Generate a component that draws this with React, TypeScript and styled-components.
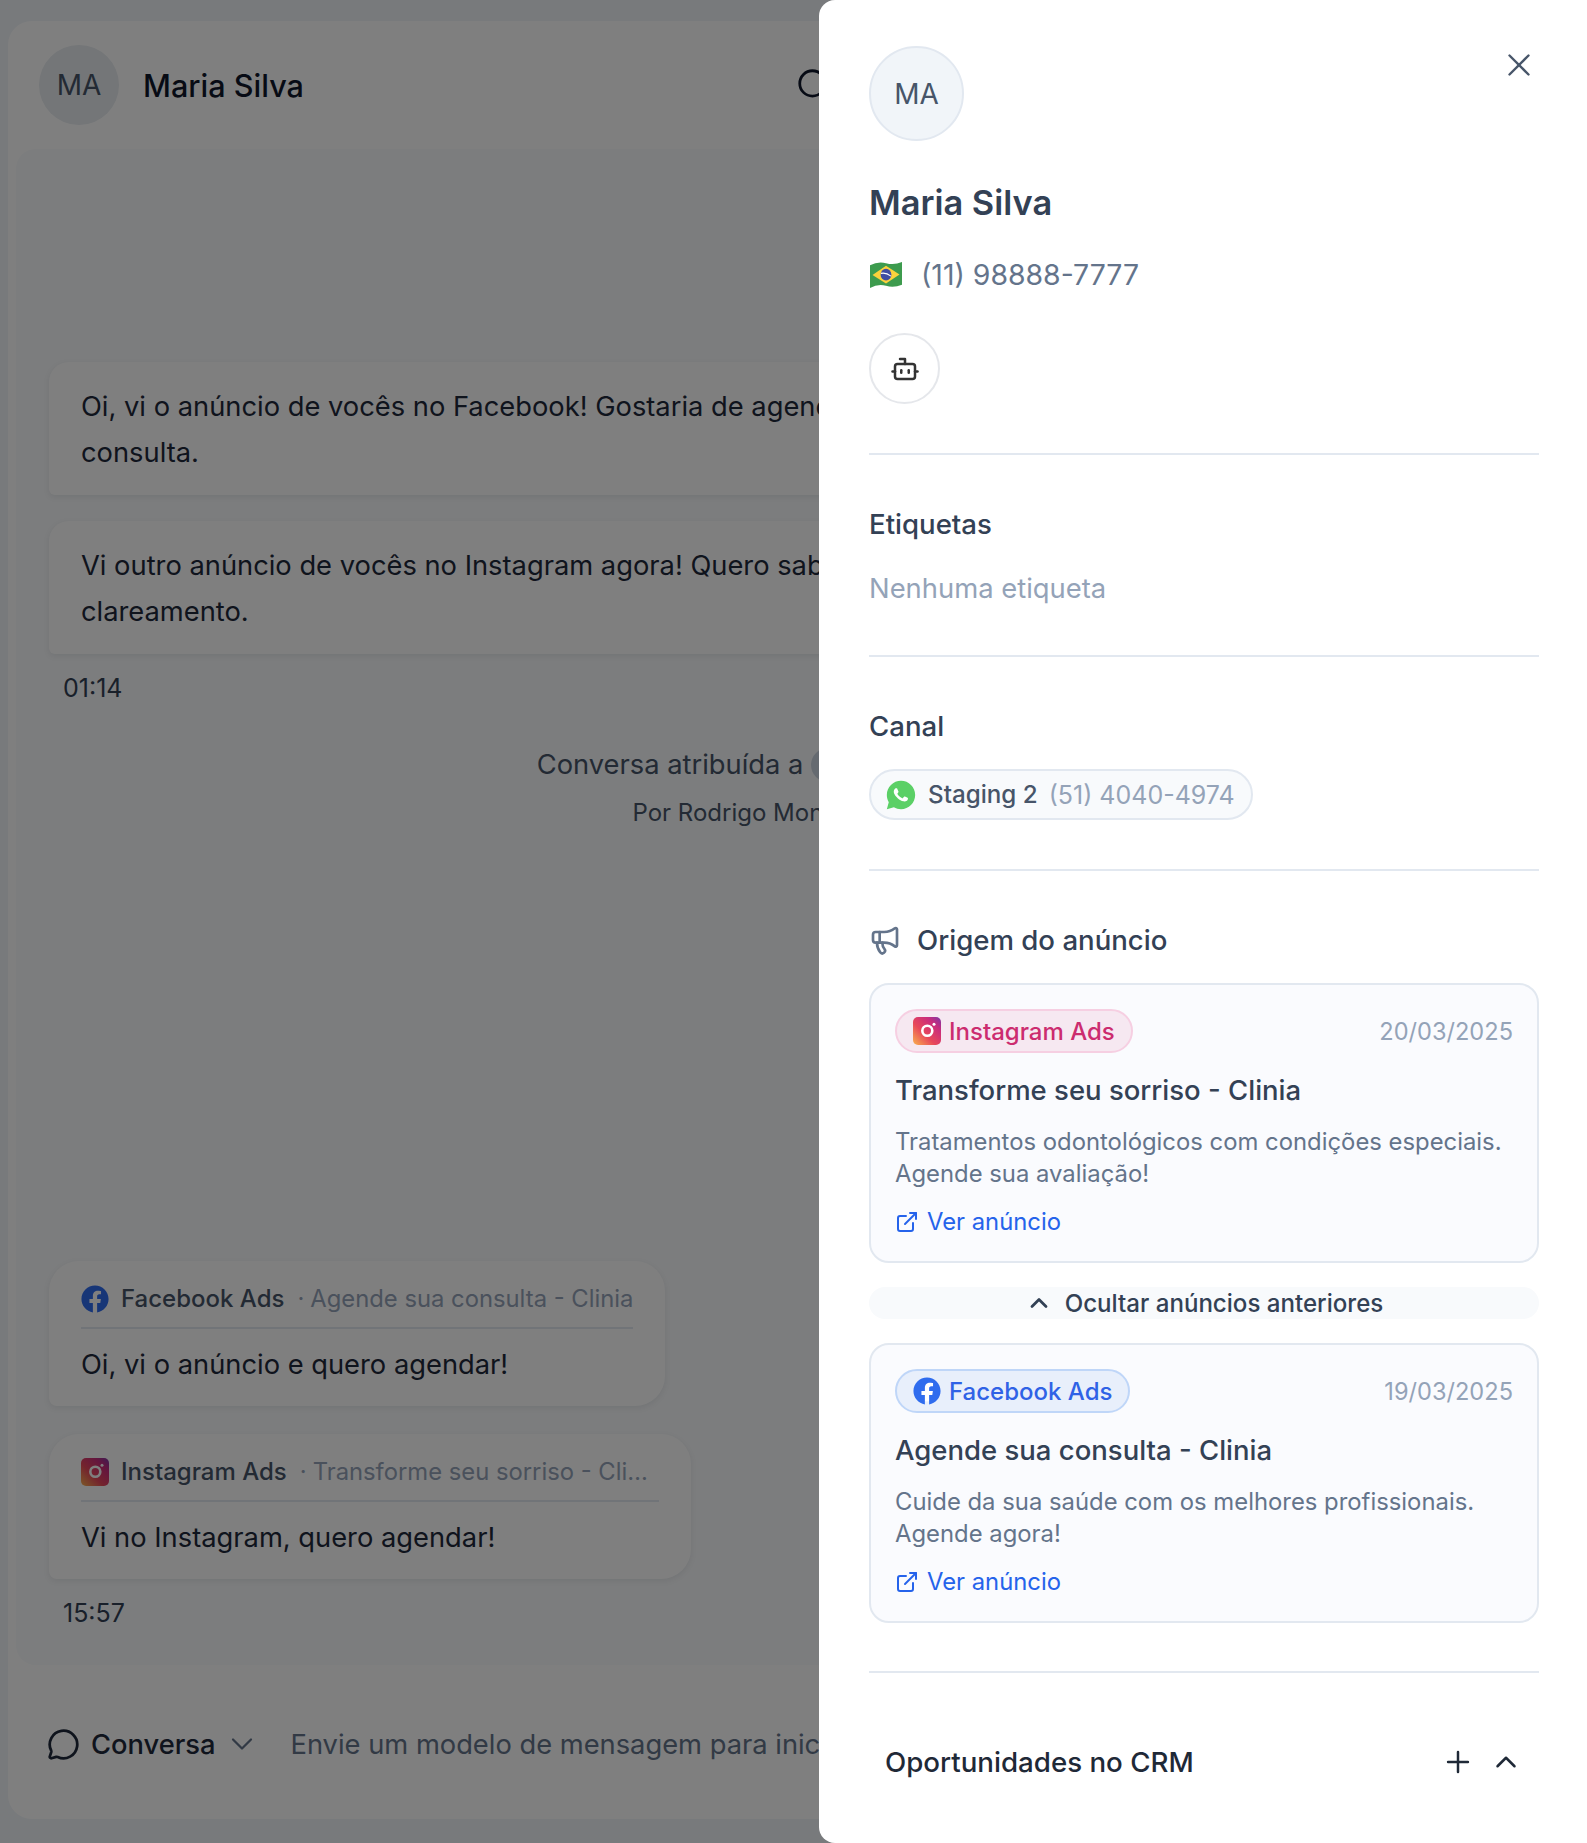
import styled, { createGlobalStyle } from "styled-components"
import {
   Bot,
   ChevronDown,
   ChevronUp,
   ExternalLink,
   Megaphone,
   MessageCircle,
   Plus,
   Search,
   X,
} from "lucide-react"
import { FaFacebook } from "react-icons/fa"
import { RiWhatsappFill } from "react-icons/ri"

const GlobalStyle = createGlobalStyle`
   html, body {
      margin: 0;
      padding: 0;
      height: 1843px;
      overflow: hidden;
      background: #f1f5f9;
      font-family: Inter, "Noto Sans", sans-serif;
   }
   * {
      box-sizing: border-box;
   }
`

const InstagramIcon = ({ size }: { size: number }) => (
   <svg width={size} height={size} viewBox="0 0 28 28" style={{ flexShrink: 0 }}>
      <defs>
         <linearGradient id="ig-gradient" x1="0" y1="1" x2="1" y2="0">
            <stop offset="0" stopColor="#f9b24e" />
            <stop offset="0.4" stopColor="#e8485a" />
            <stop offset="0.75" stopColor="#c92c7c" />
            <stop offset="1" stopColor="#7a38a8" />
         </linearGradient>
      </defs>
      <rect width="28" height="28" rx="5" fill="url(#ig-gradient)" />
      <circle cx="14.3" cy="13.8" r="5" fill="none" stroke="#fff" strokeWidth="2.6" />
      <circle cx="21" cy="7.2" r="1.5" fill="#fff" />
   </svg>
)

const BrazilFlag = () => (
   <svg width="34" height="28" viewBox="0 0 34 26" preserveAspectRatio="none">
      <path d="M1 4 Q9 0 17 2 T33 1 V22 Q25 25 17 23 T1 25 Z" fill="#3d9b4e" />
      <path d="M3.5 13 L17 4.5 L30.5 12.5 L17 21 Z" fill="#fbd23c" />
      <circle cx="17" cy="12.7" r="5.4" fill="#3f4da3" />
      <path d="M12 11.5 Q17 10.5 22 14" fill="none" stroke="#fff" strokeWidth="1" />
   </svg>
)

export default function App() {
   return (
      <>
         <GlobalStyle />
         <Page>
            <ChatCard>
               <ChatHeader>
                  <ChatAvatar>MA</ChatAvatar>
                  <ChatName>Maria Silva</ChatName>
                  <HeaderActions>
                     <Search size={38} strokeWidth={1.75} />
                  </HeaderActions>
               </ChatHeader>
               <Messages>
                  <Bubble>Oi, vi o anúncio de vocês no Facebook! Gostaria de agendar uma consulta.</Bubble>
                  <Bubble>Vi outro anúncio de vocês no Instagram agora! Quero saber sobre clareamento.</Bubble>
                  <Time>01:14</Time>
                  <SystemNote>
                     <SystemLine>
                        Conversa atribuída a <SystemAvatar /> Rodrigo Monteiro
                     </SystemLine>
                     <SystemBy>Por Rodrigo Monteiro às 01:14</SystemBy>
                  </SystemNote>
                  <AdBubble>
                     <AdBubbleHeader>
                        <FacebookGlyph $size={28}><FaFacebook size={28} /></FacebookGlyph>
                        <AdSource>Facebook Ads</AdSource>
                        <AdDot>·</AdDot>
                        <AdTitle>Agende sua consulta - Clinia</AdTitle>
                     </AdBubbleHeader>
                     <AdBubbleText>Oi, vi o anúncio e quero agendar!</AdBubbleText>
                  </AdBubble>
                  <AdBubble $wide>
                     <AdBubbleHeader>
                        <InstagramIcon size={28} />
                        <AdSource>Instagram Ads</AdSource>
                        <AdDot>·</AdDot>
                        <AdTitle>Transforme seu sorriso - Clinia</AdTitle>
                     </AdBubbleHeader>
                     <AdBubbleText>Vi no Instagram, quero agendar!</AdBubbleText>
                  </AdBubble>
                  <Time>15:57</Time>
               </Messages>
               <Composer>
                  <MessageCircle size={33} strokeWidth={2} color="#1e293b" />
                  <ComposerMode>Conversa</ComposerMode>
                  <ChevronDown size={36} strokeWidth={1.5} color="#64748b" />
                  <ComposerHint>Envie um modelo de mensagem para iniciar a conversa</ComposerHint>
               </Composer>
            </ChatCard>
         </Page>

         <Backdrop />

         <Drawer>
            <CloseButton>
               <X size={38} strokeWidth={1.5} />
            </CloseButton>

            <ProfileSection>
               <ProfileAvatar>MA</ProfileAvatar>
               <ProfileName>Maria Silva</ProfileName>
               <PhoneRow>
                  <BrazilFlag />
                  <span>(11) 98888-7777</span>
               </PhoneRow>
               <BotButton>
                  <Bot size={30} strokeWidth={2} />
               </BotButton>
            </ProfileSection>

            <Section>
               <SectionTitle>Etiquetas</SectionTitle>
               <EmptyText>Nenhuma etiqueta</EmptyText>
            </Section>

            <Section>
               <SectionTitle>Canal</SectionTitle>
               <ChannelPill>
                  <WhatsappGlyph><RiWhatsappFill size={34} /></WhatsappGlyph>
                  <ChannelName>Staging 2</ChannelName>
                  <ChannelPhone>(51) 4040-4974</ChannelPhone>
               </ChannelPill>
            </Section>

            <Section>
               <OriginTitle>
                  <Megaphone size={32} strokeWidth={2} color="#64748b" />
                  <SectionTitle>Origem do anúncio</SectionTitle>
               </OriginTitle>

               <AdCard>
                  <AdCardTop>
                     <SourceBadge $variant="instagram">
                        <InstagramIcon size={28} />
                        Instagram Ads
                     </SourceBadge>
                     <AdDate>20/03/2025</AdDate>
                  </AdCardTop>
                  <AdCardTitle>Transforme seu sorriso - Clinia</AdCardTitle>
                  <AdCardText>Tratamentos odontológicos com condições especiais. Agende sua avaliação!</AdCardText>
                  <AdLink>
                     <ExternalLink size={24} strokeWidth={2} />
                     Ver anúncio
                  </AdLink>
               </AdCard>

               <ToggleOlder>
                  <ChevronUp size={28} strokeWidth={2.4} />
                  Ocultar anúncios anteriores
               </ToggleOlder>

               <AdCard>
                  <AdCardTop>
                     <SourceBadge $variant="facebook">
                        <FacebookGlyph $size={28}><FaFacebook size={28} /></FacebookGlyph>
                        Facebook Ads
                     </SourceBadge>
                     <AdDate>19/03/2025</AdDate>
                  </AdCardTop>
                  <AdCardTitle>Agende sua consulta - Clinia</AdCardTitle>
                  <AdCardText>Cuide da sua saúde com os melhores profissionais. Agende agora!</AdCardText>
                  <AdLink>
                     <ExternalLink size={24} strokeWidth={2} />
                     Ver anúncio
                  </AdLink>
               </AdCard>
            </Section>

            <CrmRow>
               <CrmTitle>Oportunidades no CRM</CrmTitle>
               <CrmActions>
                  <Plus size={34} strokeWidth={1.75} />
                  <ChevronUp size={34} strokeWidth={1.75} />
               </CrmActions>
            </CrmRow>
         </Drawer>
      </>
   )
}


const Page = styled.div`
   display: flex;
   height: 1843px;
   padding: 21px 8px 24px;
`

const ChatCard = styled.div`
   display: flex;
   flex-direction: column;
   flex: 1;
   background: #ffffff;
   border-radius: 24px;
   overflow: hidden;
`

const ChatHeader = styled.div`
   display: flex;
   flex-direction: row;
   align-items: center;
   flex-shrink: 0;
   height: 128px;
   padding: 0 31px;
   gap: 24px;
`

const ChatAvatar = styled.div`
   display: flex;
   align-items: center;
   justify-content: center;
   width: 80px;
   height: 80px;
   border-radius: 50%;
   background: #e8ecf0;
   color: #475569;
   font-size: 28px;
`

const ChatName = styled.div`
   color: #0f172a;
   font-size: 30.6px;
   font-weight: 500;
`

const HeaderActions = styled.div`
   display: flex;
   margin-left: 467px;
   color: #0f172a;
`

const Messages = styled.div`
   display: flex;
   flex-direction: column;
   align-items: flex-start;
   flex: 1;
   margin: 0 8px;
   padding: 187px 33px 0;
   background: #f8fafc;
   border-radius: 20px;
`

const Bubble = styled.div`
   width: 1000px;
   padding: 22px 32px 19px;
   margin-top: 26px;
   background: #ffffff;
   border-radius: 20px 20px 20px 6px;
   box-shadow: 0 2px 6px rgba(15, 23, 42, 0.08);
   color: #1e293b;
   font-size: 27.3px;
   line-height: 46px;
`

const Time = styled.div`
   margin: 18px 0 0 14px;
   color: #334155;
   font-size: 25px;
   line-height: 32px;
`

const SystemNote = styled.div`
   display: flex;
   flex-direction: column;
   align-items: center;
   align-self: stretch;
   gap: 12px;
   margin-top: 41px;
   margin-bottom: 404px;
`

const SystemLine = styled.div`
   display: flex;
   align-items: center;
   gap: 8px;
   margin-left: 26px;
   color: #475569;
   font-size: 27.3px;
   line-height: 40px;
`

const SystemAvatar = styled.span`
   width: 34px;
   height: 34px;
   border-radius: 50%;
   background: #cbd5e1;
`

const SystemBy = styled.div`
   margin-left: 16px;
   color: #475569;
   font-size: 24px;
   line-height: 32px;
`

const AdBubble = styled.div<{ $wide?: boolean }>`
   display: flex;
   flex-direction: column;
   width: ${({ $wide }) => $wide ? "642px" : "auto"};
   padding: 22px 32px 21px;
   margin-top: 28px;
   background: #ffffff;
   border-radius: 30px 30px 30px 8px;
   box-shadow: 0 2px 6px rgba(15, 23, 42, 0.08);
`

const AdBubbleHeader = styled.div`
   display: flex;
   align-items: center;
   padding-bottom: 12px;
   border-bottom: 2px solid #e2e8f0;
   font-size: 23.8px;
   line-height: 32px;
`

const AdSource = styled.span`
   margin-left: 12px;
   color: #475569;
   font-size: 24px;
   font-weight: 500;
   white-space: nowrap;
`

const AdDot = styled.span`
   margin: 0 6px 0 13px;
   color: #94a3b8;
`

const AdTitle = styled.span`
   min-width: 0;
   max-width: 337px;
   color: #94a3b8;
   white-space: nowrap;
   overflow: hidden;
   text-overflow: ellipsis;
`

const AdBubbleText = styled.div`
   margin-top: 16px;
   color: #1e293b;
   font-size: 27.3px;
   line-height: 40px;
`

const Composer = styled.div`
   display: flex;
   align-items: center;
   flex-shrink: 0;
   height: 154px;
   padding: 4px 39px 0;
`

const ComposerMode = styled.span`
   margin-left: 11px;
   margin-right: 9px;
   color: #1e293b;
   font-size: 27.3px;
   font-weight: 500;
`

const ComposerHint = styled.span`
   margin-left: 30px;
   color: #64748b;
   font-size: 27.3px;
   white-space: nowrap;
`

const Backdrop = styled.div`
   position: fixed;
   inset: 0;
   background: rgba(0, 0, 0, 0.5);
`

const Drawer = styled.aside`
   position: fixed;
   top: 0;
   right: 0;
   bottom: 0;
   width: 768px;
   padding: 46px 48px 0 50px;
   background: #ffffff;
   border-radius: 16px 0 0 16px;
   overflow: hidden;
`

const CloseButton = styled.button`
   position: absolute;
   top: 46px;
   right: 49px;
   display: flex;
   padding: 0;
   background: none;
   border: none;
   color: #475569;
`

const ProfileSection = styled.div`
   display: flex;
   flex-direction: column;
   align-items: flex-start;
   padding-bottom: 49px;
   border-bottom: 2px solid #e2e8f0;
`

const ProfileAvatar = styled.div`
   display: flex;
   align-items: center;
   justify-content: center;
   width: 95px;
   height: 95px;
   border-radius: 50%;
   background: #f1f5f9;
   border: 2px solid #e2e8f0;
   color: #475569;
   font-size: 28px;
`

const ProfileName = styled.h2`
   margin: 42px 0 0;
   color: #334155;
   font-size: 34.4px;
   font-weight: 600;
   line-height: 40px;
`

const PhoneRow = styled.div`
   display: flex;
   align-items: center;
   gap: 18px;
   margin-top: 34px;
   color: #64748b;
   font-size: 28.4px;
   line-height: 36px;
`

const BotButton = styled.div`
   display: flex;
   align-items: center;
   justify-content: center;
   width: 71px;
   height: 71px;
   margin-top: 40px;
   border: 2px solid #e5e7eb;
   border-radius: 50%;
   color: #333333;
`

const Section = styled.section`
   padding: 51px 0 49px;
   border-bottom: 2px solid #e2e8f0;

   &:last-of-type {
      padding-bottom: 48px;
   }
`

const SectionTitle = styled.div`
   color: #334155;
   font-size: 27.6px;
   font-weight: 500;
   line-height: 36px;
`

const EmptyText = styled.div`
   margin-top: 28px;
   color: #94a3b8;
   font-size: 27.4px;
   line-height: 36px;
`

const ChannelPill = styled.div`
   display: inline-flex;
   align-items: center;
   height: 51px;
   margin-top: 25px;
   padding: 0 16px 0 13px;
   background: #f8fafc;
   border: 2px solid #e2e8f0;
   border-radius: 26px;
   font-size: 25px;
   white-space: nowrap;
`

const WhatsappGlyph = styled.span`
   display: flex;
   color: #5bd066;
   background: radial-gradient(circle, #ffffff 55%, transparent 60%);
   margin-right: 10px;
`

const ChannelName = styled.span`
   margin-right: 11px;
   color: #475569;
   font-size: 24.2px;
   font-weight: 500;
`

const ChannelPhone = styled.span`
   color: #94a3b8;
`

const OriginTitle = styled.div`
   display: flex;
   align-items: center;
   gap: 16px;
`

const AdCard = styled.div`
   display: flex;
   flex-direction: column;
   align-items: flex-start;
   height: 280px;
   margin-top: 25px;
   padding: 24px 24px 0;
   background: #fafbfe;
   border: 2px solid #e2e8f0;
   border-radius: 20px;
`

const AdCardTop = styled.div`
   display: flex;
   align-items: center;
   justify-content: space-between;
   align-self: stretch;
`

const SourceBadge = styled.div<{ $variant: "instagram" | "facebook" }>`
   display: inline-flex;
   align-items: center;
   gap: 8px;
   height: 44px;
   padding: 0 16px;
   border-radius: 22px;
   border: 2px solid ${({ $variant }) => $variant === "instagram" ? "#f6cfe2" : "#bfd6f8"};
   background: ${({ $variant }) => $variant === "instagram" ? "#f6e8f1" : "#e8effb"};
   color: ${({ $variant }) => $variant === "instagram" ? "#cc2c6f" : "#2f62e6"};
   font-size: 24px;
   font-weight: 500;
`

const FacebookGlyph = styled.span<{ $size: number }>`
   display: flex;
   flex-shrink: 0;
   width: ${({ $size }) => $size}px;
   height: ${({ $size }) => $size}px;
   border-radius: 50%;
   color: #2f6cee;
   background: radial-gradient(circle, #ffffff 50%, transparent 55%);
`

const AdDate = styled.span`
   color: #94a3b8;
   font-size: 23.6px;
`

const AdCardTitle = styled.div`
   margin-top: 19px;
   color: #334155;
   font-size: 27.5px;
   font-weight: 500;
   line-height: 36px;
`

const AdCardText = styled.div`
   margin-top: 18px;
   color: #64748b;
   font-size: 23.85px;
   line-height: 32px;
`

const AdLink = styled.div`
   display: flex;
   align-items: center;
   gap: 8px;
   margin-top: 16px;
   color: #2563eb;
   font-size: 23.8px;
   line-height: 32px;
`

const ToggleOlder = styled.div`
   display: flex;
   align-items: center;
   justify-content: center;
   gap: 12px;
   height: 32px;
   margin-top: 24px;
   margin-bottom: -1px;
   background: #f8fafc;
   border-radius: 16px;
   color: #334155;
   font-size: 24.1px;
   font-weight: 500;
`

const CrmRow = styled.div`
   display: flex;
   align-items: center;
   justify-content: space-between;
   margin-top: 72px;
   padding: 0 16px;
`

const CrmTitle = styled.div`
   color: #1f2937;
   font-size: 27.7px;
   font-weight: 500;
`

const CrmActions = styled.div`
   display: flex;
   align-items: center;
   gap: 14px;
   color: #1f2937;
`
